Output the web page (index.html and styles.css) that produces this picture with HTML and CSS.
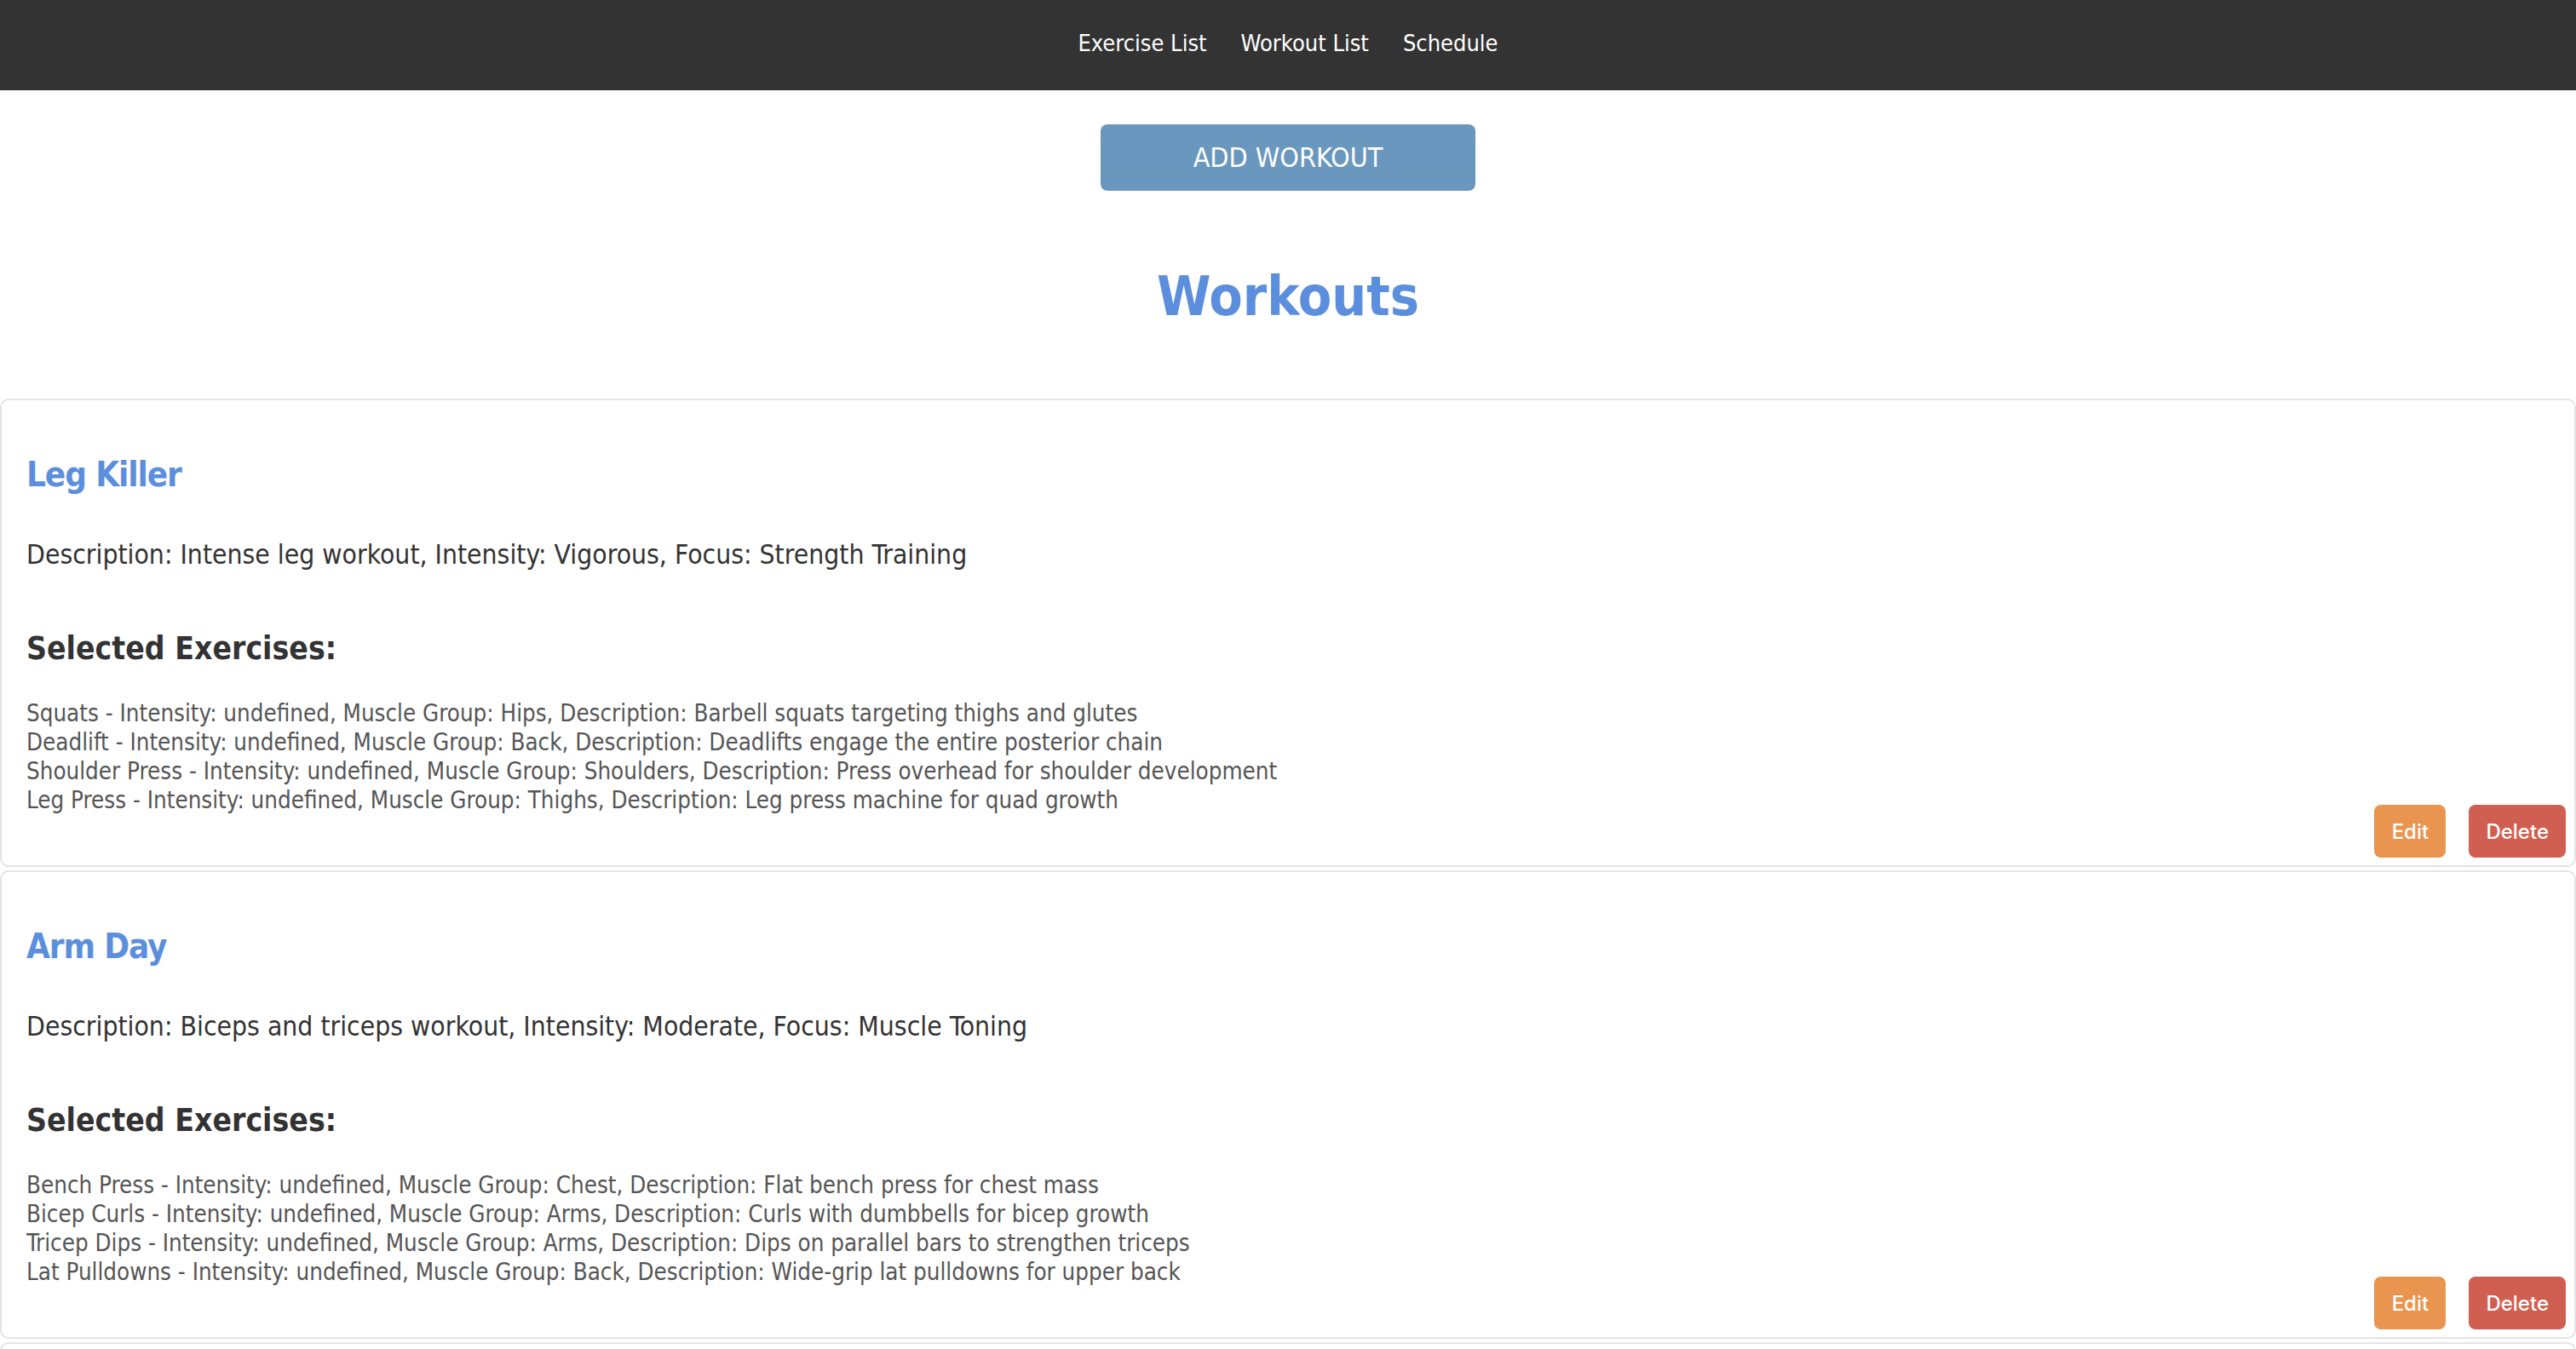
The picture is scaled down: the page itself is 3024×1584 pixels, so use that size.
FILE: index.html
```html
<!DOCTYPE html>
<html lang="en">
<head>
<meta charset="utf-8">
<title>Workouts</title>
<link rel="stylesheet" href="styles.css">
</head>
<body>
<nav class="topnav">
  <a class="nav-link" href="#">Exercise List</a>
  <a class="nav-link" href="#">Workout List</a>
  <a class="nav-link" href="#">Schedule</a>
</nav>
<main class="page">
  <div class="add-row"><button class="add-btn">ADD WORKOUT</button></div>
  <h1 class="page-title">Workouts</h1>
  <section class="workouts">
    <article class="card">
      <div class="card-body">
        <h2 class="card-title">Leg Killer</h2>
        <p class="card-desc">Description: Intense leg workout, Intensity: Vigorous, Focus: Strength Training</p>
        <h3 class="card-sub">Selected Exercises:</h3>
        <ul class="ex-list">
          <li>Squats - Intensity: undefined, Muscle Group: Hips, Description: Barbell squats targeting thighs and glutes</li>
          <li>Deadlift - Intensity: undefined, Muscle Group: Back, Description: Deadlifts engage the entire posterior chain</li>
          <li>Shoulder Press - Intensity: undefined, Muscle Group: Shoulders, Description: Press overhead for shoulder development</li>
          <li>Leg Press - Intensity: undefined, Muscle Group: Thighs, Description: Leg press machine for quad growth</li>
        </ul>
      </div>
      <div class="card-actions">
        <button class="btn btn-edit">Edit</button>
        <button class="btn btn-delete">Delete</button>
      </div>
    </article>
    <article class="card">
      <div class="card-body">
        <h2 class="card-title">Arm Day</h2>
        <p class="card-desc">Description: Biceps and triceps workout, Intensity: Moderate, Focus: Muscle Toning</p>
        <h3 class="card-sub">Selected Exercises:</h3>
        <ul class="ex-list">
          <li>Bench Press - Intensity: undefined, Muscle Group: Chest, Description: Flat bench press for chest mass</li>
          <li>Bicep Curls - Intensity: undefined, Muscle Group: Arms, Description: Curls with dumbbells for bicep growth</li>
          <li>Tricep Dips - Intensity: undefined, Muscle Group: Arms, Description: Dips on parallel bars to strengthen triceps</li>
          <li>Lat Pulldowns - Intensity: undefined, Muscle Group: Back, Description: Wide-grip lat pulldowns for upper back</li>
        </ul>
      </div>
      <div class="card-actions">
        <button class="btn btn-edit">Edit</button>
        <button class="btn btn-delete">Delete</button>
      </div>
    </article>
    <article class="card card-next" aria-hidden="true"></article>
  </section>
</main>
</body>
</html>
```

FILE: styles.css
```css
* { box-sizing: border-box; }

html, body {
  margin: 0;
  padding: 0;
  background: #ffffff;
}

body {
  font-family: "DejaVu Sans Condensed", "DejaVu Sans", sans-serif;
  color: #333333;
}

.topnav {
  height: 106px;
  background: #333333;
  display: flex;
  justify-content: center;
  align-items: center;
  gap: 40px;
  padding-bottom: 4px;
}

.nav-link {
  color: #ffffff;
  text-decoration: none;
  font-size: 27px;
  line-height: 34px;
}

.page {
  display: flex;
  flex-direction: column;
}

.add-row {
  display: flex;
  justify-content: center;
  padding-top: 40px;
}

.add-btn {
  width: 440px;
  height: 78px;
  background: #6a97bd;
  color: #ffffff;
  border: none;
  border-radius: 8px;
  font-family: "DejaVu Sans Condensed", "DejaVu Sans", sans-serif;
  font-size: 32px;
  padding: 0;
}

.page-title {
  margin: 86px 0 82px;
  text-align: center;
  font-size: 64px;
  line-height: 76px;
  font-weight: bold;
  color: #5b8fdd;
}

.workouts {
  display: flex;
  flex-direction: column;
  gap: 4px;
}

.card {
  border: 2px solid #e3e3e3;
  border-radius: 10px;
  display: grid;
  grid-template-columns: 1fr auto;
  padding: 30px 10px 9px 29px;
  background: #ffffff;
}

.card-next {
  min-height: 200px;
}

.card-body {
  padding-bottom: 51px;
}

.card-title {
  margin: 33px 0 0;
  font-size: 40px;
  line-height: 48px;
  font-weight: bold;
  letter-spacing: -1.1px;
  color: #5b8fdd;
}

.card-desc {
  margin: 51px 0 0;
  font-size: 31.6px;
  line-height: 38px;
  color: #333333;
}

.card-sub {
  margin: 70px 0 0;
  font-size: 37px;
  line-height: 44px;
  font-weight: bold;
  color: #333333;
}

.ex-list {
  list-style: none;
  margin: 36px 0 0;
  padding: 0;
  font-size: 27.5px;
  line-height: 34px;
  color: #555555;
}

.card-actions {
  align-self: end;
  display: flex;
  gap: 27px;
}

.btn {
  height: 62px;
  padding: 0 20px;
  border: none;
  border-radius: 8px;
  color: #ffffff;
  font-family: Inter, "Liberation Sans", sans-serif;
  font-size: 24px;
  font-weight: 500;
}

.btn-edit { background: #e9954f; min-width: 84px; }
.btn-delete { background: #d15f51; min-width: 113px; }
```
